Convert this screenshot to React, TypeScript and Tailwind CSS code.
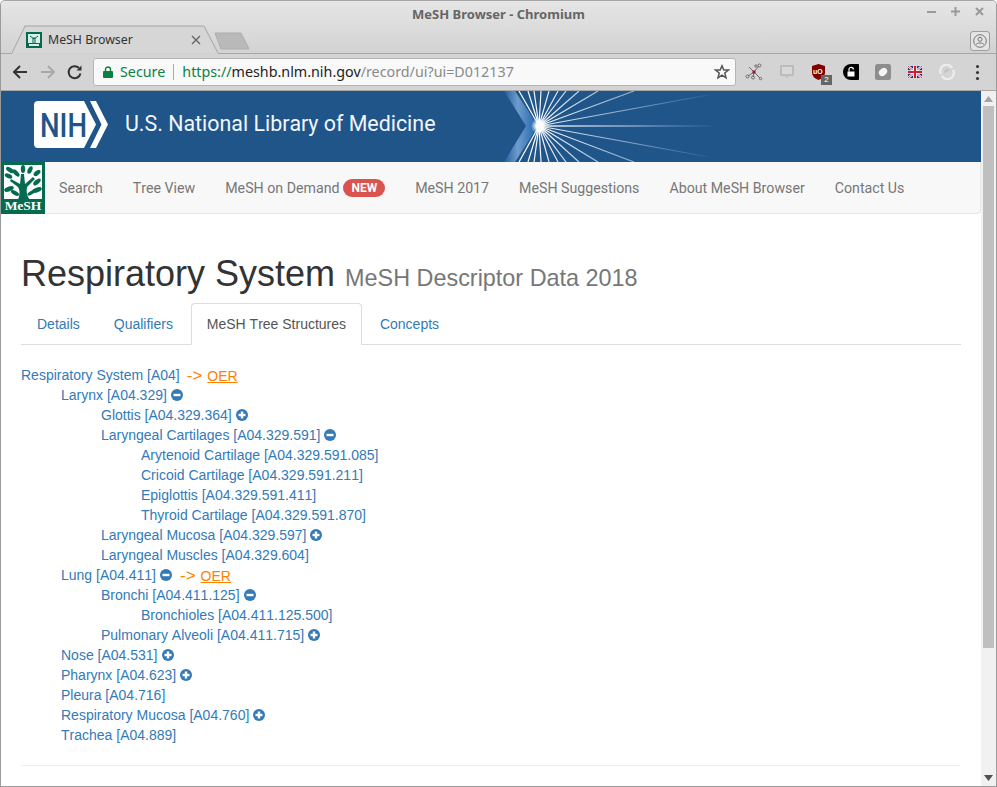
const uiFont = "font-['Noto_Sans',sans-serif]";

interface TreeRow {
  label: string;
  level: number;
  icon?: "plus" | "minus";
  oer?: boolean;
}

const rows: TreeRow[] = [
  { label: "Respiratory System [A04]", level: 0, oer: true },
  { label: "Larynx [A04.329]", level: 1, icon: "minus" },
  { label: "Glottis [A04.329.364]", level: 2, icon: "plus" },
  { label: "Laryngeal Cartilages [A04.329.591]", level: 2, icon: "minus" },
  { label: "Arytenoid Cartilage [A04.329.591.085]", level: 3 },
  { label: "Cricoid Cartilage [A04.329.591.211]", level: 3 },
  { label: "Epiglottis [A04.329.591.411]", level: 3 },
  { label: "Thyroid Cartilage [A04.329.591.870]", level: 3 },
  { label: "Laryngeal Mucosa [A04.329.597]", level: 2, icon: "plus" },
  { label: "Laryngeal Muscles [A04.329.604]", level: 2 },
  { label: "Lung [A04.411]", level: 1, icon: "minus", oer: true },
  { label: "Bronchi [A04.411.125]", level: 2, icon: "minus" },
  { label: "Bronchioles [A04.411.125.500]", level: 3 },
  { label: "Pulmonary Alveoli [A04.411.715]", level: 2, icon: "plus" },
  { label: "Nose [A04.531]", level: 1, icon: "plus" },
  { label: "Pharynx [A04.623]", level: 1, icon: "plus" },
  { label: "Pleura [A04.716]", level: 1 },
  { label: "Respiratory Mucosa [A04.760]", level: 1, icon: "plus" },
  { label: "Trachea [A04.889]", level: 1 },
];

const levels = ["pl-0", "pl-10", "pl-20", "pl-[120px]"];

const navItems = ["Search", "Tree View", "MeSH on Demand", "MeSH 2017", "MeSH Suggestions", "About MeSH Browser", "Contact Us"];

const tabs = ["Details", "Qualifiers", "MeSH Tree Structures", "Concepts"];

const rayEnds = [518, 527, 533, 540, 548, 557, 565, 578, 597, 633];

function TreeIcon({ type }: { type: "plus" | "minus" }) {
  return (
    <svg width="12" height="12" viewBox="0 0 12 12" className="ml-1 shrink-0">
      <circle cx="6" cy="6" r="6" fill="#337ab7" />
      <rect x="2.5" y="4.8" width="7" height="2.4" fill="#fff" />
      {type === "plus" && <rect x="4.8" y="2.5" width="2.4" height="7" fill="#fff" />}
    </svg>
  );
}

function Burst() {
  const cx = 39;
  const cy = 35;
  return (
    <svg width="240" height="71" viewBox="0 0 240 71" className="absolute left-[499px] top-0">
      <defs>
        <linearGradient id="chev" x1="0" x2="1" y1="0" y2="0">
          <stop offset="0" stopColor="#1e5d9f" />
          <stop offset="0.4" stopColor="#6f9ccb" />
          <stop offset="1" stopColor="#1a62ac" />
        </linearGradient>
        <linearGradient id="rayH" gradientUnits="userSpaceOnUse" x1="39" x2="212" y1="0" y2="0">
          <stop offset="0" stopColor="#fff" stopOpacity="0.95" />
          <stop offset="0.55" stopColor="#b9cde2" stopOpacity="0.65" />
          <stop offset="1" stopColor="#1d65ab" stopOpacity="0.5" />
        </linearGradient>
        <linearGradient id="rayUp" gradientUnits="userSpaceOnUse" x1="39" x2="120" y1="35" y2="0">
          <stop offset="0" stopColor="#fff" />
          <stop offset="1" stopColor="#b9cde2" stopOpacity="0.75" />
        </linearGradient>
        <linearGradient id="rayDown" gradientUnits="userSpaceOnUse" x1="39" x2="120" y1="35" y2="71">
          <stop offset="0" stopColor="#fff" />
          <stop offset="1" stopColor="#b9cde2" stopOpacity="0.75" />
        </linearGradient>
        <radialGradient id="glow">
          <stop offset="0.35" stopColor="#fff" />
          <stop offset="1" stopColor="#fff" stopOpacity="0" />
        </radialGradient>
      </defs>
      <path d="M4 0H15L38 35L15 71H4L26 35Z" fill="url(#chev)" />
      {rayEnds.map((x) => (
        <g key={x} strokeWidth="1.2">
          <line x1={cx} y1={cy} x2={x - 499} y2="0" stroke="url(#rayUp)" />
          <line x1={cx} y1={cy} x2={x - 499} y2="71" stroke="url(#rayDown)" />
        </g>
      ))}
      <line x1={cx} y1={cy} x2="208" y2="4" stroke="url(#rayH)" strokeWidth="1.2" />
      <line x1={cx} y1={cy} x2="211" y2="35" stroke="url(#rayH)" strokeWidth="1.6" />
      <line x1={cx} y1={cy} x2="209" y2="66" stroke="url(#rayH)" strokeWidth="1.2" />
      <circle cx={cx} cy={cy} r="8" fill="url(#glow)" />
    </svg>
  );
}

function NihLogo() {
  return (
    <svg width="74" height="47" viewBox="0 0 74 47" className="shrink-0">
      <path d="M4 0H50L62 23.5L50 47H4Q0 47 0 43V4Q0 0 4 0Z" fill="#fff" />
      <path d="M56 0H62L74 23.5L62 47H56L67.5 23.5Z" fill="#fff" />
      <text x="6" y="36" fontFamily="Roboto, sans-serif" fontSize="33" fontWeight="500" fill="#20558a" textLength="47" lengthAdjust="spacingAndGlyphs">
        NIH
      </text>
    </svg>
  );
}

function MeshLogo() {
  return (
    <svg width="44" height="52" viewBox="0 0 44 52" className="shrink-0 self-start">
      <rect width="44" height="52" fill="#046b51" />
      <rect x="3" y="3" width="38" height="46" fill="#fff" />
      <rect x="3" y="37" width="38" height="12" fill="#046b51" />
      <path d="M17 38C19 32 19 28 17 25L9 19L10 17L19 22L20 12H23L24 22L32 15L34 17L26 25C25 30 26 34 29 38Z" fill="#046b51" />
      <g fill="#046b51">
        <ellipse cx="9" cy="8" rx="4.5" ry="2.2" transform="rotate(35 9 8)" />
        <ellipse cx="15" cy="11" rx="4.5" ry="2.2" transform="rotate(45 15 11)" />
        <ellipse cx="7.5" cy="14" rx="4" ry="2.2" transform="rotate(25 7.5 14)" />
        <ellipse cx="8" cy="27" rx="5" ry="2.4" transform="rotate(-20 8 27)" />
        <ellipse cx="14" cy="31" rx="4.5" ry="2" transform="rotate(30 14 31)" />
        <ellipse cx="22" cy="7" rx="2.2" ry="4" />
        <ellipse cx="29" cy="8" rx="2.2" ry="4" transform="rotate(25 29 8)" />
        <ellipse cx="36" cy="11" rx="4" ry="2.2" transform="rotate(-40 36 11)" />
        <ellipse cx="36" cy="20" rx="4.5" ry="2.2" transform="rotate(-40 36 20)" />
        <ellipse cx="36" cy="28" rx="5" ry="2.4" transform="rotate(-20 36 28)" />
        <ellipse cx="30" cy="31" rx="4" ry="1.8" transform="rotate(-30 30 31)" />
      </g>
      <text x="22" y="47.5" textAnchor="middle" fontFamily="'Liberation Serif', serif" fontWeight="700" fontSize="13.5" fill="#fff">
        MeSH
      </text>
    </svg>
  );
}

function Toolbar() {
  return (
    <div className="flex h-[37px] items-center border-b border-[#a8a8a8] bg-[#d4d4d4]">
      <svg width="16" height="16" viewBox="0 0 16 16" className="ml-[11px]" fill="none" stroke="#333" strokeWidth="2">
        <path d="M15 8H2M8 2L2 8L8 14" />
      </svg>
      <svg width="16" height="16" viewBox="0 0 16 16" className="ml-[12px]" fill="none" stroke="#a9a9a9" strokeWidth="2">
        <path d="M1 8H14M8 2L14 8L8 14" />
      </svg>
      <svg width="16" height="16" viewBox="0 0 16 16" className="ml-[11px]" fill="none" stroke="#333" strokeWidth="2">
        <path d="M13.5 9.5A6 6 0 1 1 12 4" />
        <path d="M14.5 1.5V6.5H9.5Z" fill="#333" strokeWidth="0" />
      </svg>
      <div className={`ml-[10px] flex h-[28px] w-[643px] items-center rounded-[3px] border border-[#b5b5b5] bg-[#f9f9f9] pl-[9px] text-[14.3px] ${uiFont}`}>
        <svg width="10" height="12" viewBox="0 0 10 12" className="shrink-0">
          <rect y="5" width="10" height="7" rx="1" fill="#0b8043" />
          <path d="M2.5 5V3.5a2.5 2.5 0 0 1 5 0V5" fill="none" stroke="#0b8043" strokeWidth="1.4" />
        </svg>
        <span className="ml-[7px] text-[#0b8043]">Secure</span>
        <span className="mx-[8px] h-[16px] w-px bg-[#aaa]" />
        <span className="whitespace-nowrap">
          <span className="text-[#0b8043]">https://</span>
          <span className="text-[#222]">meshb.nlm.nih.gov</span>
          <span className="text-[#8a8a8a]">/record/ui?ui=D012137</span>
        </span>
        <svg width="16" height="16" viewBox="0 0 16 16" className="ml-auto mr-[5px]" fill="none" stroke="#555" strokeWidth="1.5">
          <path d="M8 1.8L9.8 6H14.5L10.8 9L12 13.8L8 11.2L4 13.8L5.2 9L1.5 6H6.2Z" />
        </svg>
      </div>
      <svg width="18" height="18" viewBox="0 0 18 18" className="ml-[9px]" fill="none" stroke="#6e6e6e" strokeWidth="1">
        <path d="M3 13L9 9L15 15M9 9L14 3M9 9L4 4M8 14L9 9" />
        <circle cx="14.5" cy="2.5" r="1.5" />
        <circle cx="11" cy="3" r="1.2" />
        <circle cx="2.5" cy="13.5" r="1.5" />
        <circle cx="8" cy="14.5" r="1.5" />
        <circle cx="15.5" cy="15.5" r="1.2" />
        <rect x="7.5" y="7.5" width="3" height="3" fill="#a01040" stroke="none" />
      </svg>
      <svg width="16" height="16" viewBox="0 0 16 16" className="ml-[16px]">
        <path d="M2 1H14Q15 1 15 2V11Q15 12 14 12H10L8 14L6 12H2Q1 12 1 11V2Q1 1 2 1Z" fill="#bcbcbc" />
        <rect x="3" y="3" width="10" height="7" fill="#d8d8d8" />
      </svg>
      <div className="relative ml-[16px] h-[16px] w-[15px]">
        <svg width="15" height="16" viewBox="0 0 15 16">
          <path d="M7.5 0L14 2V9Q13.5 14 7.5 16Q1.5 14 1 9V2Z" fill="#800000" />
        </svg>
        <span className="absolute left-[2px] top-[3px] font-['Liberation_Sans',sans-serif] text-[7px] font-bold leading-[9px] text-white">uO</span>
        <span className="absolute left-[10px] top-[11px] flex h-[10px] w-[11px] items-center justify-center bg-[#666] font-['Liberation_Sans',sans-serif] text-[8px] leading-none text-white">2</span>
      </div>
      <svg width="16" height="16" viewBox="0 0 16 16" className="ml-[17px]">
        <path d="M8 0H15Q16 0 16 1V15Q16 16 15 16H8A8 8 0 0 1 8 0Z" fill="#000" />
        <rect x="4.5" y="7.5" width="7" height="5" fill="#fff" />
        <path d="M6 7.5V5.5a2.2 2.2 0 0 1 4.4 0" fill="none" stroke="#fff" strokeWidth="1.2" />
      </svg>
      <svg width="16" height="16" viewBox="0 0 16 16" className="ml-[16px]">
        <rect width="16" height="16" rx="2.5" fill="#8d8d8d" />
        <ellipse cx="8" cy="8" rx="4.5" ry="3.5" transform="rotate(-40 8 8)" fill="#f3f3f3" />
      </svg>
      <svg width="14" height="12" viewBox="0 0 14 12" className="ml-[17px]">
        <rect width="14" height="12" fill="#26307a" />
        <path d="M0 0L14 12M14 0L0 12" stroke="#fff" strokeWidth="2.4" />
        <path d="M0 0L14 12M14 0L0 12" stroke="#c8202f" strokeWidth="0.8" />
        <path d="M7 0V12M0 6H14" stroke="#fff" strokeWidth="3.6" />
        <path d="M7 0V12M0 6H14" stroke="#c8202f" strokeWidth="2" />
      </svg>
      <svg width="16" height="16" viewBox="0 0 16 16" className="ml-[17px]" fill="none" stroke="#ececec" strokeWidth="2.4">
        <path d="M2 10A6 6 0 0 1 13 4" />
        <path d="M14 6A6 6 0 0 1 3 12" />
        <path d="M6 9A3 3 0 0 1 10 6" stroke="#c4c4c4" />
      </svg>
      <div className="ml-[21px] flex flex-col gap-[3px]">
        <span className="size-[3px] rounded-full bg-[#333]" />
        <span className="size-[3px] rounded-full bg-[#333]" />
        <span className="size-[3px] rounded-full bg-[#333]" />
      </div>
    </div>
  );
}

function TitleBar() {
  return (
    <div className="relative h-[54px] rounded-t-[5px] bg-gradient-to-b from-[#e6e6e6] to-[#d2d2d2]">
      <div className={`pt-[6px] text-center text-[13px] font-bold leading-[17px] text-[#666] ${uiFont}`}>MeSH Browser - Chromium</div>
      <div className="absolute right-[11px] top-[6px] flex items-center gap-[13px] text-[#999]">
        <svg width="11" height="11" viewBox="0 0 11 11" stroke="#999" strokeWidth="2"><path d="M1 6H10" /></svg>
        <svg width="11" height="11" viewBox="0 0 11 11" stroke="#999" strokeWidth="2"><path d="M1 5.5H10M5.5 1V10" /></svg>
        <svg width="11" height="11" viewBox="0 0 11 11" stroke="#999" strokeWidth="2"><path d="M2 2L9 9M9 2L2 9" /></svg>
      </div>
      <div className="absolute bottom-[1px] left-[11px] h-[28px] w-[210px]">
        <svg width="210" height="28" viewBox="0 0 210 28" className="absolute inset-0">
          <path d="M0 28L13 1H192L206 28" fill="#d6d6d6" stroke="#a5a5a5" />
        </svg>
        <div className={`absolute left-[14px] top-[7px] flex w-[175px] items-center text-[12.3px] leading-[16px] text-[#333] ${uiFont}`}>
          <svg width="16" height="16" viewBox="0 0 16 16" className="shrink-0">
            <rect width="16" height="16" fill="#046b51" />
            <rect x="2" y="2" width="12" height="9" fill="#d7efe7" />
            <path d="M7 11V6H9V11M4 4L8 7L12 4" stroke="#046b51" fill="none" />
            <rect x="3" y="12" width="10" height="2" fill="#d7efe7" />
          </svg>
          <span className="ml-[6px]">MeSH Browser</span>
          <svg width="10" height="10" viewBox="0 0 10 10" className="ml-auto" stroke="#666" strokeWidth="1.4">
            <path d="M1 1L9 9M9 1L1 9" />
          </svg>
        </div>
      </div>
      <svg width="36" height="19" viewBox="0 0 36 19" className="absolute bottom-[3px] left-[213px]">
        <path d="M1 1H27L35 17H7Z" fill="#b9b9b9" stroke="#adadad" strokeLinejoin="round" />
      </svg>
      <div className="absolute bottom-0 left-0 h-px w-[11px] bg-[#a8a8a8]" />
      <div className="absolute bottom-0 left-[217px] right-0 h-px bg-[#a8a8a8]" />
      <div className="absolute bottom-[3px] right-[6px] flex size-[20px] items-center justify-center rounded-[3px] border border-[#9d9d9d] bg-[#e4e4e4]">
        <svg width="14" height="14" viewBox="0 0 14 14" fill="none" stroke="#777" strokeWidth="1">
          <circle cx="7" cy="7" r="6.3" />
          <circle cx="7" cy="5.3" r="2" />
          <path d="M3 10.5C4.5 8.5 9.5 8.5 11 10.5" />
        </svg>
      </div>
    </div>
  );
}

function Scrollbar() {
  return (
    <div className="flex w-[15px] shrink-0 flex-col items-center bg-[#f1f1f1]">
      <svg width="9" height="6" viewBox="0 0 9 6" className="mt-[5px]"><path d="M4.5 0L9 6H0Z" fill="#a3a3a3" /></svg>
      <div className="mt-[4px] h-[542px] w-[11px] bg-[#bfbfbf]" />
      <svg width="9" height="6" viewBox="0 0 9 6" className="mb-[5px] mt-auto"><path d="M0 0H9L4.5 6Z" fill="#505050" /></svg>
    </div>
  );
}

export default function App() {
  return (
    <div className="flex h-[787px] w-[997px] flex-col overflow-hidden rounded-t-[5px] border border-[#9b9b9b] border-t-[#a6a6a6] bg-white">
      <div className="-mt-px">
        <TitleBar />
      </div>
      <Toolbar />
      <div className="flex min-h-0 flex-1">
        <div className="min-w-0 flex-1 font-['Liberation_Sans',sans-serif] [font-kerning:none]">
          <div className="relative flex h-[71px] items-center bg-[#20558a] pb-[4px] pl-[33px] font-['Roboto',sans-serif]">
            <NihLogo />
            <span className="ml-[17px] text-[21.4px] text-[#f3f6fa]">U.S. National Library of Medicine</span>
            <Burst />
          </div>
          <div className="flex h-[52px] rounded-b-[4px] border-b border-r border-[#e7e7e7] bg-[#f8f8f8] font-['Roboto',sans-serif] text-[14.2px] text-[#777]">
            <MeshLogo />
            <div className="flex items-center pt-[2px]">
              {navItems.map((item, i) => (
                <span key={item} className={`flex items-center whitespace-nowrap px-[15px] ${i === 0 ? "-ml-[1px]" : ""}`}>
                  {item}
                  {item === "MeSH on Demand" && (
                    <span className="ml-[4px] rounded-[10px] bg-[#d9534f] px-[8px] py-[3px] text-[12px] font-bold leading-none text-white">NEW</span>
                  )}
                </span>
              ))}
            </div>
          </div>
          <div className="px-5">
            <div className="mt-[37px] flex items-baseline">
              <h1 className="text-[36px] leading-[46px] text-[#333]">Respiratory System</h1>
              <span className="ml-[10px] text-[23.4px] text-[#777]">MeSH Descriptor Data 2018</span>
            </div>
            <div className="mt-[6px] flex h-[42px] w-[940px] border-b border-[#ddd] text-[14px]">
              {tabs.map((tab, i) =>
                i === 2 ? (
                  <span key={tab} className="mr-[2px] flex h-[42px] w-[171px] items-center justify-center rounded-t-[4px] border border-[#ddd] border-b-white bg-white text-[#555]">{tab}</span>
                ) : (
                  <span key={tab} className="mr-[2px] flex h-[42px] items-center px-4 text-[#337ab7]">{tab}</span>
                )
              )}
            </div>
            <div className="mt-[20px] text-[14px] leading-5 text-[#337ab7]">
              {rows.map((row) => (
                <div key={row.label} className={`flex h-5 items-center whitespace-nowrap ${levels[row.level]}`}>
                  <span>{row.label}</span>
                  {row.icon && <TreeIcon type={row.icon} />}
                  {row.oer && (
                    <span className={`flex items-baseline pt-[1px] text-[#ff8000] ${row.icon ? "ml-[8px]" : "ml-[7px]"}`}>
                      <span className="text-[17px] leading-5">-&gt;</span>
                      <span className="ml-[5px] text-[14px] underline">OER</span>
                    </span>
                  )}
                </div>
              ))}
            </div>
            <div className="mt-[20px] h-px w-[939px] bg-[#eeeeee]" />
          </div>
        </div>
        <Scrollbar />
      </div>
    </div>
  );
}
